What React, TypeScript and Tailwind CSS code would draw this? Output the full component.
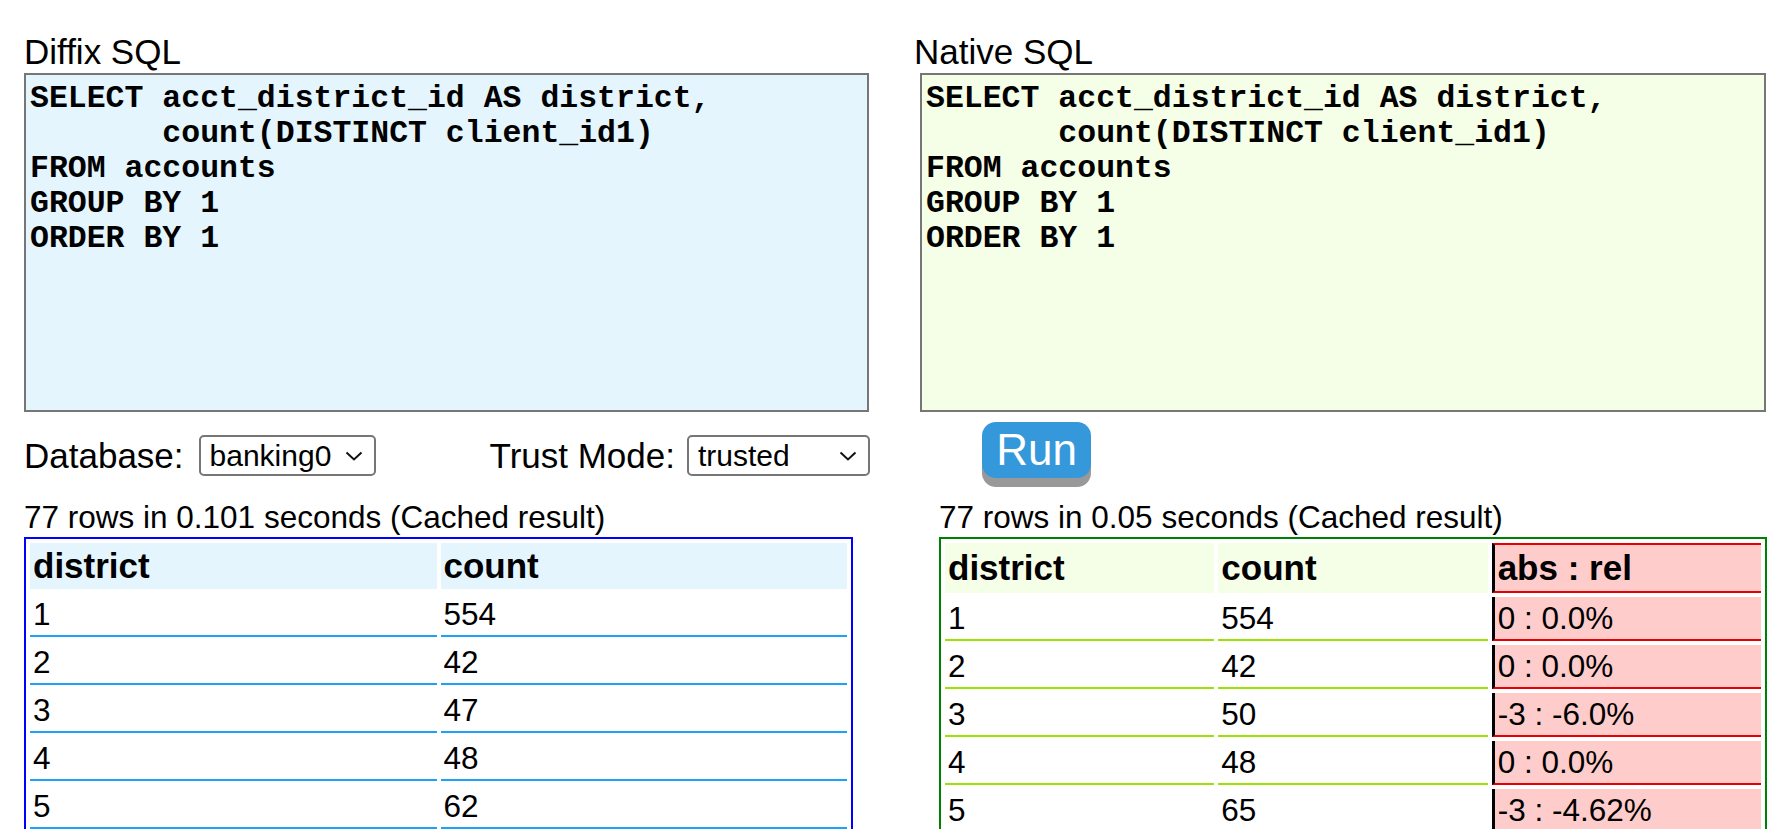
import React, { useState } from 'react';

const QUERY = `SELECT acct_district_id AS district,
       count(DISTINCT client_id1)
FROM accounts
GROUP BY 1
ORDER BY 1`;

const diffixRows: [number, number][] = [
  [1, 554],
  [2, 42],
  [3, 47],
  [4, 48],
  [5, 62],
];

const nativeRows: [number, number, string][] = [
  [1, 554, '0 : 0.0%'],
  [2, 42, '0 : 0.0%'],
  [3, 50, '-3 : -6.0%'],
  [4, 48, '0 : 0.0%'],
  [5, 65, '-3 : -4.62%'],
];

const Chevron: React.FC = () => (
  <svg width="18" height="10" viewBox="0 0 18 10" className="pointer-events-none absolute right-[13px] top-1/2 -translate-y-1/2">
    <path d="M1.5 1.5 L9 8.5 L16.5 1.5" fill="none" stroke="#111" strokeWidth="2" />
  </svg>
);

const Select: React.FC<{ value: string; options: string[]; onChange: (v: string) => void; width: string }> = ({ value, options, onChange, width }) => (
  <div className={`relative ${width} h-[41px]`}>
    <select
      value={value}
      onChange={(e) => onChange(e.target.value)}
      className="h-full w-full appearance-none rounded-[5px] border-2 border-[#767676] bg-white pl-[9px] text-[30px] leading-[35px] text-black outline-none"
    >
      {options.map((o) => (
        <option key={o} value={o}>{o}</option>
      ))}
    </select>
    <Chevron />
  </div>
);

const App: React.FC = () => {
  const [diffixSql, setDiffixSql] = useState(QUERY);
  const [nativeSql, setNativeSql] = useState(QUERY);
  const [db, setDb] = useState('banking0');
  const [mode, setMode] = useState('trusted');

  return (
    <div className="h-screen overflow-hidden bg-white text-black font-['Liberation_Sans',Arial,sans-serif]">
      <div className="flex pt-[32px]">
        {/* diffix side */}
        <div className="w-[914px] shrink-0 pl-[24px]">
          <div className="text-[35px] leading-[40px] mb-[1px]">Diffix SQL</div>
          <textarea
            value={diffixSql}
            onChange={(e) => setDiffixSql(e.target.value)}
            spellCheck={false}
            className="block h-[339px] w-[845px] resize-none border-2 border-[#767676] bg-[#e4f5fe] px-[4px] pt-[6px] pb-[4px] font-['Courier_New','Liberation_Mono',monospace] text-[31.5px] font-bold leading-[35px] outline-none"
          />
          <div className="flex h-[87px] w-[846px] items-center justify-between">
            <div className="flex items-center">
              <span className="text-[35px] leading-[40px]">Database:</span>
              <div className="ml-[15px]">
                <Select value={db} options={['banking0']} onChange={setDb} width="w-[177px]" />
              </div>
            </div>
            <div className="flex items-center">
              <span className="text-[35px] leading-[40px]">Trust Mode:</span>
              <div className="ml-[12px]">
                <Select value={mode} options={['trusted', 'untrusted']} onChange={setMode} width="w-[183px]" />
              </div>
            </div>
          </div>
          <div className="text-[31.5px] leading-[36px]">77 rows in 0.101 seconds (Cached result)</div>
          <table className="mt-[2px] w-[829px] table-fixed border-separate border-spacing-[4px] border-2 border-[#0000ff]">
            <thead>
              <tr>
                <th className="bg-[#e4f5fe] px-[3px] py-[3px] text-left text-[35px] leading-[40px] font-bold">district</th>
                <th className="bg-[#e4f5fe] px-[3px] py-[3px] text-left text-[35px] leading-[40px] font-bold">count</th>
              </tr>
            </thead>
            <tbody>
              {diffixRows.map(([d, c]) => (
                <tr key={d}>
                  <td className="border-b-2 border-[#1ca3f8] px-[3px] py-[3px] text-[31.5px] leading-[36px]">{d}</td>
                  <td className="border-b-2 border-[#1ca3f8] px-[3px] py-[3px] text-[31.5px] leading-[36px]">{c}</td>
                </tr>
              ))}
            </tbody>
          </table>
        </div>

        {/* native side */}
        <div className="flex-1">
          <div className="text-[35px] leading-[40px] mb-[1px]">Native SQL</div>
          <textarea
            value={nativeSql}
            onChange={(e) => setNativeSql(e.target.value)}
            spellCheck={false}
            className="ml-[6px] block h-[339px] w-[846px] resize-none border-2 border-[#767676] bg-[#f5fee6] px-[4px] pt-[6px] pb-[4px] font-['Courier_New','Liberation_Mono',monospace] text-[31.5px] font-bold leading-[35px] outline-none"
          />
          <div className="h-[87px] pt-[10px]">
            <button className="ml-[68px] flex h-[56px] w-[109px] items-center justify-center rounded-[14px] bg-[#3498db] text-[44px] leading-[50px] text-white shadow-[0_9px_0_#999999]">
              Run
            </button>
          </div>
          <div className="ml-[25px] text-[31.5px] leading-[36px]">77 rows in 0.05 seconds (Cached result)</div>
          <table className="ml-[25px] mt-[2px] w-[828px] table-fixed border-separate border-spacing-[4px] border-2 border-[#008000]">
            <thead>
              <tr>
                <th className="bg-[#f5fee6] px-[3px] py-[3px] text-left text-[35px] leading-[40px] font-bold">district</th>
                <th className="bg-[#f5fee6] px-[3px] py-[3px] text-left text-[35px] leading-[40px] font-bold">count</th>
                <th className="border-y-2 border-l-[3px] border-y-[#e60000] border-l-black bg-[#ffcccc] px-[3px] py-[3px] text-left text-[35px] leading-[40px] font-bold">abs : rel</th>
              </tr>
            </thead>
            <tbody>
              {nativeRows.map(([d, c, diff]) => (
                <tr key={d}>
                  <td className="border-b-2 border-[#9be300] px-[3px] py-[3px] text-[31.5px] leading-[36px]">{d}</td>
                  <td className="border-b-2 border-[#9be300] px-[3px] py-[3px] text-[31.5px] leading-[36px]">{c}</td>
                  <td className="border-b-2 border-l-[3px] border-b-[#e60000] border-l-black bg-[#ffcccc] px-[3px] py-[3px] text-[31.5px] leading-[36px]">{diff}</td>
                </tr>
              ))}
            </tbody>
          </table>
        </div>
      </div>
    </div>
  );
};

export default App;
